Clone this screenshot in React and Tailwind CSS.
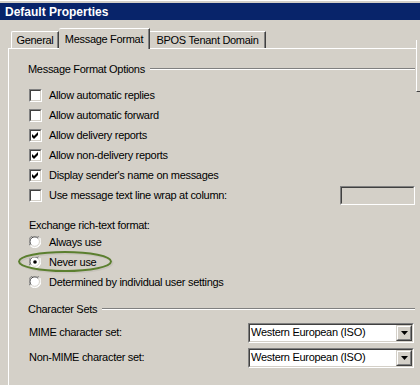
import React from "react";

const FONT = { fontFamily: '"Liberation Sans", Arial, sans-serif' };

function Sunken({ className = "", innerClass = "", children }) {
  return (
    <div className={"border border-t-[#808080] border-l-[#808080] border-b-white border-r-white " + className}>
      <div className={"h-full w-full border border-t-[#404040] border-l-[#404040] border-b-[#d4d0c8] border-r-[#d4d0c8] " + innerClass}>
        {children}
      </div>
    </div>
  );
}

function Checkbox({ checked }) {
  return (
    <Sunken className="w-[13px] h-[13px] shrink-0" innerClass="bg-white">
      {checked && (
        <svg width="9" height="9" viewBox="0 0 9 9" className="block">
          <path d="M1 3 L3 5 L7 1 L7 4 L3 8 L1 6 Z" fill="#000" />
        </svg>
      )}
    </Sunken>
  );
}

function Radio({ checked }) {
  return (
    <svg width="12" height="12" viewBox="0 0 12 12" className="block shrink-0">
      <circle cx="6" cy="6" r="5.5" fill="#fff" />
      <path d="M1.1 9.5 A5.5 5.5 0 0 1 10.5 1.5" stroke="#808080" strokeWidth="1" fill="none" />
      <path d="M10.5 1.5 A5.5 5.5 0 0 1 1.1 9.5" stroke="#ffffff" strokeWidth="1" fill="none" />
      <path d="M2.2 8.8 A4.5 4.5 0 0 1 9.2 2.4" stroke="#404040" strokeWidth="1" fill="none" />
      <path d="M9.2 2.4 A4.5 4.5 0 0 1 2.2 8.8" stroke="#d4d0c8" strokeWidth="1" fill="none" />
      {checked && <circle cx="6" cy="6" r="1.8" fill="#000" />}
    </svg>
  );
}

function GroupLabel({ children }) {
  return (
    <div className="flex items-center h-[20px] pl-[19px]">
      <span className="whitespace-nowrap">{children}</span>
      <div className="flex-1 ml-[5px] border-t border-t-[#808080] border-b border-b-white" />
    </div>
  );
}

function CheckRow({ checked, label, children }) {
  return (
    <div className="flex items-center h-[20px] pl-[20px]">
      <Checkbox checked={checked} />
      <span className="ml-[7px] whitespace-nowrap">{label}</span>
      {children}
    </div>
  );
}

function RadioRow({ checked, label, children }) {
  return (
    <div className="relative flex items-center h-[20px] pl-[20px]">
      <Radio checked={checked} />
      <span className="ml-[8px] whitespace-nowrap">{label}</span>
      {children}
    </div>
  );
}

function Select({ value }) {
  return (
    <Sunken className="w-[166px] h-[20px]" innerClass="bg-white flex items-center">
      <span className="flex-1 pl-[1px] whitespace-nowrap">{value}</span>
      <div className="w-[16px] h-[16px] border border-t-[#d4d0c8] border-l-[#d4d0c8] border-b-[#404040] border-r-[#404040]">
        <div className="h-full w-full bg-[#d4d0c8] border border-t-white border-l-white border-b-[#808080] border-r-[#808080] flex items-center justify-center">
          <svg width="7" height="4" viewBox="0 0 7 4" className="block">
            <path d="M0 0 H7 L3.5 4 Z" fill="#000" />
          </svg>
        </div>
      </div>
    </Sunken>
  );
}

export default function App() {
  return (
    <div
      className="w-[420px] h-[385px] overflow-hidden bg-[#d4d0c8] text-[11px] tracking-[-0.3px] text-black border-t border-t-white"
      style={FONT}
    >
      <div className="mt-[2px] h-[17px] bg-[#08246a] flex items-center pl-[5px]">
        <span className="text-white font-bold text-[12px] tracking-normal">Default Properties</span>
      </div>

      <div className="flex mt-[8px]">
        <div className="ml-[8px] w-[408px] flex flex-col">
          <div className="flex items-end h-[20px] pl-[3px]">
            <div className="h-[17px] w-[48px] border-l border-t border-white border-r border-r-[#404040] shadow-[inset_-1px_0_0_#808080] rounded-tl-[2px] flex items-center justify-center">
              General
            </div>
            <div className="relative z-10 h-[21px] -mb-[1px] w-[91px] bg-[#d4d0c8] border-t border-white shadow-[inset_-1px_0_0_#808080] border-r border-r-[#404040] rounded-tl-[2px] flex items-start justify-center pt-[2px]">
              Message Format
            </div>
            <div className="h-[17px] w-[116px] border-t border-white border-r border-r-[#404040] shadow-[inset_-1px_0_0_#808080] flex items-center justify-center">
              BPOS Tenant Domain
            </div>
          </div>

          <div className="border-t border-l border-white h-[340px] pr-[1px]">
            <div className="mt-[10px]">
              <GroupLabel>Message Format Options</GroupLabel>
            </div>
            <div className="mt-[6px]">
              <CheckRow checked={false} label="Allow automatic replies" />
              <CheckRow checked={false} label="Allow automatic forward" />
              <CheckRow checked label="Allow delivery reports" />
              <CheckRow checked label="Allow non-delivery reports" />
              <CheckRow checked label="Display sender's name on messages" />
              <CheckRow checked={false} label="Use message text line wrap at column:">
                <div className="flex-1" />
                <Sunken className="w-[75px] h-[19px]" innerClass="bg-[#d4d0c8]" />
              </CheckRow>
            </div>

            <div className="mt-[13px] h-[14px] flex items-center pl-[20px]">
              Exchange rich-text format:
            </div>
            <RadioRow label="Always use" />
            <RadioRow checked label="Never use">
              <svg
                className="absolute left-[8px] -top-[3px] pointer-events-none"
                width="98"
                height="25"
                viewBox="0 0 98 25"
              >
                <ellipse cx="48" cy="12.5" rx="46" ry="9.5" fill="none" stroke="#c8c4bc" strokeWidth="2" transform="translate(1.5 1.5)" />
                <ellipse cx="48" cy="12.5" rx="46" ry="9.5" fill="none" stroke="#5b7f2f" strokeWidth="2" />
              </svg>
            </RadioRow>
            <RadioRow label="Determined by individual user settings" />

            <div className="mt-[7px]">
              <GroupLabel>Character Sets</GroupLabel>
            </div>
            <div className="mt-[3px] h-[21px] flex items-center pl-[20px] pr-[1px]">
              <span className="flex-1">MIME character set:</span>
              <Select value="Western European (ISO)" />
            </div>
            <div className="mt-[4px] h-[21px] flex items-center pl-[20px] pr-[1px]">
              <span className="flex-1">Non-MIME character set:</span>
              <Select value="Western European (ISO)" />
            </div>
          </div>
        </div>
        <div className="mt-[12px] w-[4px] h-[52px] border-l border-white border-b border-b-[#404040]" />
      </div>
    </div>
  );
}
